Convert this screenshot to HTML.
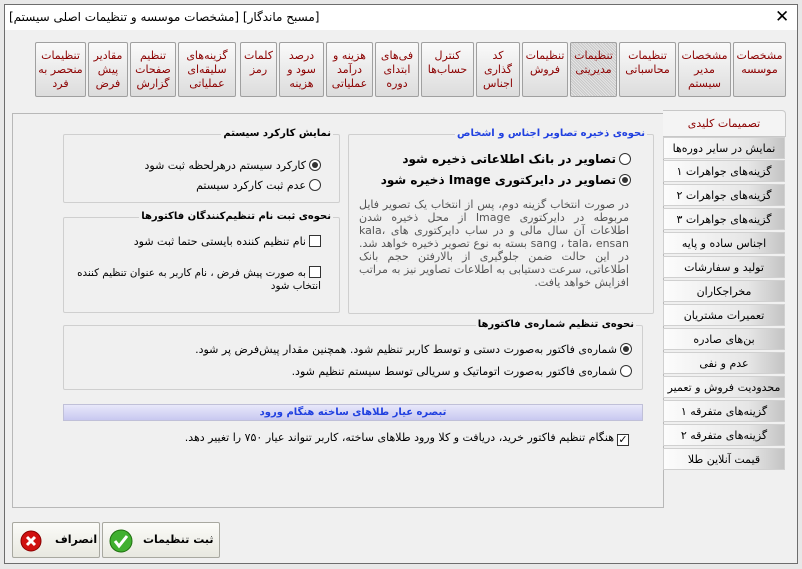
<!DOCTYPE html>
<html><head><meta charset="utf-8"><style>
*{box-sizing:border-box;margin:0;padding:0}
body{width:802px;height:569px;background:#e8e8e8;font-family:"DejaVu Sans","Liberation Sans",sans-serif;font-size:11px;color:#000;position:relative;overflow:hidden}
.win{position:absolute;left:4px;top:4px;width:794px;height:560px;background:#f0f0f0;border:1px solid #6d6d6d}
.title{position:absolute;left:0;top:0;width:792px;height:25px;background:#fff}
.title span{position:absolute;left:4px;top:5px;font-size:12px;white-space:nowrap;direction:rtl}
.x{position:absolute;left:770px;top:2px;font-size:17px;font-family:"DejaVu Sans",sans-serif}
.a{position:absolute;direction:rtl;white-space:nowrap}
.tab{position:absolute;top:42px;height:55px;border:1px solid #a0a0a0;border-radius:2px;background:linear-gradient(#fafafa,#dcdcdc);color:#8b0000;text-align:center;font-size:11px;line-height:14px;padding-top:6px;direction:rtl}
.sel{background:repeating-linear-gradient(45deg,#c8c8c8 0 1px,#e4e4e4 1px 2px)}
.panel{position:absolute;left:12px;top:113px;width:652px;height:395px;border:1px solid #b8b8b8;background:#f0f0f0}
.stab{position:absolute;left:663px;width:122px;height:22px;border:1px solid #d0d0d0;background:linear-gradient(90deg,#fcfcfc,#e6e6e6 70%,#c4c4c4);text-align:center;line-height:21px;direction:rtl;font-size:11px}
.grp{position:absolute;border:1px solid #cfcfcf;border-radius:2px}
.gt{position:absolute;top:-7px;right:6px;background:#f0f0f0;font-weight:bold;font-size:10px;direction:rtl;white-space:nowrap;padding:0 2px}
.rad{display:inline-block;width:12px;height:12px;border:1px solid #333;border-radius:50%;background:#fff;vertical-align:-2px;position:relative;margin-left:3px}
.rad.on:after{content:"";position:absolute;left:2px;top:2px;width:6px;height:6px;border-radius:50%;background:#333}
.chk{display:inline-block;width:12px;height:12px;border:1px solid #333;background:#fff;vertical-align:-2px;margin-left:3px;position:relative}
.btn{position:absolute;top:522px;height:36px;border:1px solid #a8a8a0;border-radius:2px;background:linear-gradient(#fbfbf8,#e8e8e0);font-weight:bold;font-size:11px;white-space:nowrap}
</style></head><body>
<div class="win">
<div class="title"><span>[مسبح ماندگار] [مشخصات موسسه و تنظیمات اصلی سیستم]</span><div class="x">✕</div></div>
</div>
<div class="tab" style="left:733px;width:53px">مشخصات<br>موسسه</div>
<div class="tab" style="left:678px;width:53px">مشخصات<br>مدیر<br>سیستم</div>
<div class="tab" style="left:619px;width:57px">تنظیمات<br>محاسباتی</div>
<div class="tab sel" style="left:570px;width:47px">تنظیمات<br>مدیریتی</div>
<div class="tab" style="left:522px;width:46px">تنظیمات<br>فروش</div>
<div class="tab" style="left:476px;width:44px">کد<br>گذاری<br>اجناس</div>
<div class="tab" style="left:421px;width:53px">کنترل<br>حساب‌ها</div>
<div class="tab" style="left:375px;width:44px">فی‌های<br>ابتدای<br>دوره</div>
<div class="tab" style="left:326px;width:47px">هزینه و<br>درآمد<br>عملیاتی</div>
<div class="tab" style="left:279px;width:45px">درصد<br>سود و<br>هزینه</div>
<div class="tab" style="left:240px;width:37px">کلمات<br>رمز</div>
<div class="tab" style="left:178px;width:58px">گزینه‌های<br>سلیقه‌ای<br>عملیاتی</div>
<div class="tab" style="left:130px;width:46px">تنظیم<br>صفحات<br>گزارش</div>
<div class="tab" style="left:88px;width:40px">مقادیر<br>پیش<br>فرض</div>
<div class="tab" style="left:35px;width:51px">تنظیمات<br>منحصر به<br>فرد</div>

<div class="panel"></div>
<div style="position:absolute;left:663px;top:110px;width:123px;height:27px;border:1px solid #c8c8c8;border-left:none;border-radius:0 4px 0 0;background:#f4f4f4;color:#8b0000;text-align:center;line-height:26px;direction:rtl">تصمیمات کلیدی</div>
<div class="stab" style="top:137px">نمایش در سایر دوره‌ها</div>
<div class="stab" style="top:160px">گزینه‌های جواهرات ۱</div>
<div class="stab" style="top:184px">گزینه‌های جواهرات ۲</div>
<div class="stab" style="top:208px">گزینه‌های جواهرات ۳</div>
<div class="stab" style="top:232px">اجناس ساده و پایه</div>
<div class="stab" style="top:256px">تولید و سفارشات</div>
<div class="stab" style="top:280px">مخراجکاران</div>
<div class="stab" style="top:304px">تعمیرات مشتریان</div>
<div class="stab" style="top:328px">بن‌های صادره</div>
<div class="stab" style="top:352px">عدم و نفی</div>
<div class="stab" style="top:376px">محدودیت فروش و تعمیر</div>
<div class="stab" style="top:400px">گزینه‌های متفرقه ۱</div>
<div class="stab" style="top:424px">گزینه‌های متفرقه ۲</div>
<div class="stab" style="top:448px">قیمت آنلاین طلا</div>

<div class="grp" style="left:348px;top:134px;width:306px;height:180px">
<div class="gt" style="color:#2040e0">نحوه‌ی ذخیره تصاویر اجناس و اشخاص</div>
<div class="a" style="right:22px;top:17px;font-weight:bold;font-size:12px"><span class="rad"></span>تصاویر در بانک اطلاعاتی ذخیره شود</div>
<div class="a" style="right:22px;top:38px;font-weight:bold;font-size:12px"><span class="rad on"></span>تصاویر در دایرکتوری Image ذخیره شود</div>
<div class="a" style="right:24px;top:63px;color:#555;font-size:11px;line-height:13px;white-space:normal;width:270px;text-align:justify">در صورت انتخاب گزینه دوم، پس از انتخاب یک تصویر فایل مربوطه در دایرکتوری Image از محل ذخیره شدن اطلاعات آن سال مالی و در ساب دایرکتوری های kala، sang ، tala، ensan بسته به نوع تصویر ذخیره خواهد شد. در این حالت ضمن جلوگیری از بالارفتن حجم بانک اطلاعاتی، سرعت دستیابی به اطلاعات تصاویر نیز به مراتب افزایش خواهد یافت.</div>
</div>

<div class="grp" style="left:63px;top:134px;width:277px;height:69px">
<div class="gt">نمایش کارکرد سیستم</div>
<div class="a" style="right:18px;top:24px"><span class="rad on"></span>کارکرد سیستم درهرلحظه ثبت شود</div>
<div class="a" style="right:18px;top:44px"><span class="rad"></span>عدم ثبت کارکرد سیستم</div>
</div>

<div class="grp" style="left:63px;top:217px;width:277px;height:96px">
<div class="gt">نحوه‌ی ثبت نام تنظیم‌کنندگان فاکتورها</div>
<div class="a" style="right:18px;top:17px"><span class="chk"></span>نام تنظیم کننده بایستی حتما ثبت شود</div>
<div class="a" style="right:18px;top:48px;line-height:13px;font-size:10.3px"><span class="chk"></span>به صورت پیش فرض ، نام کاربر به عنوان تنظیم کننده<br>انتخاب شود&nbsp;&nbsp;&nbsp;&nbsp;&nbsp;&nbsp;&nbsp;&nbsp;&nbsp;&nbsp;&nbsp;&nbsp;&nbsp;&nbsp;&nbsp;&nbsp;&nbsp;&nbsp;&nbsp;&nbsp;&nbsp;&nbsp;&nbsp;&nbsp;&nbsp;&nbsp;&nbsp;&nbsp;&nbsp;&nbsp;&nbsp;&nbsp;&nbsp;&nbsp;&nbsp;&nbsp;&nbsp;&nbsp;&nbsp;&nbsp;&nbsp;&nbsp;&nbsp;&nbsp;&nbsp;</div>
</div>

<div class="grp" style="left:63px;top:325px;width:580px;height:65px">
<div class="gt">نحوه‌ی تنظیم شماره‌ی فاکتورها</div>
<div class="a" style="right:10px;top:17px"><span class="rad on"></span>شماره‌ی فاکتور به‌صورت دستی و توسط کاربر تنظیم شود. همچنین مقدار پیش‌فرض پر شود.</div>
<div class="a" style="right:10px;top:39px"><span class="rad"></span>شماره‌ی فاکتور به‌صورت اتوماتیک و سریالی توسط سیستم تنظیم شود.</div>
</div>

<div style="position:absolute;left:63px;top:404px;width:580px;height:17px;border:1px solid #c0c0d8;background:linear-gradient(#e8e8fa,#c8c8f0);color:#2040e0;font-weight:bold;font-size:10px;text-align:center;line-height:15px;direction:rtl">تبصره عیار طلاهای ساخته هنگام ورود</div>
<div class="a" style="right:173px;top:431px"><span class="chk" style="text-align:center;line-height:9px;font-size:11px">✓</span>هنگام تنظیم فاکتور خرید، دریافت و کلا ورود طلاهای ساخته، کاربر تنواند عیار ۷۵۰ را تغییر دهد.</div>

<div class="btn" style="left:12px;width:88px">
<svg style="position:absolute;left:7px;top:7px" width="22" height="22"><circle cx="11" cy="11" r="10" fill="#d01010" stroke="#800" /><path d="M7 7L15 15M15 7L7 15" stroke="#fff" stroke-width="3"/></svg>
<span style="position:absolute;left:42px;top:10px">انصراف</span></div>
<div class="btn" style="left:102px;width:118px">
<svg style="position:absolute;left:6px;top:6px" width="24" height="24"><circle cx="12" cy="12" r="11" fill="#40b030" stroke="#207010"/><path d="M6 12L10 17L18 7" stroke="#fff" stroke-width="3" fill="none"/></svg>
<span style="position:absolute;left:40px;top:10px;direction:rtl">ثبت تنظیمات</span></div>
</body></html>
